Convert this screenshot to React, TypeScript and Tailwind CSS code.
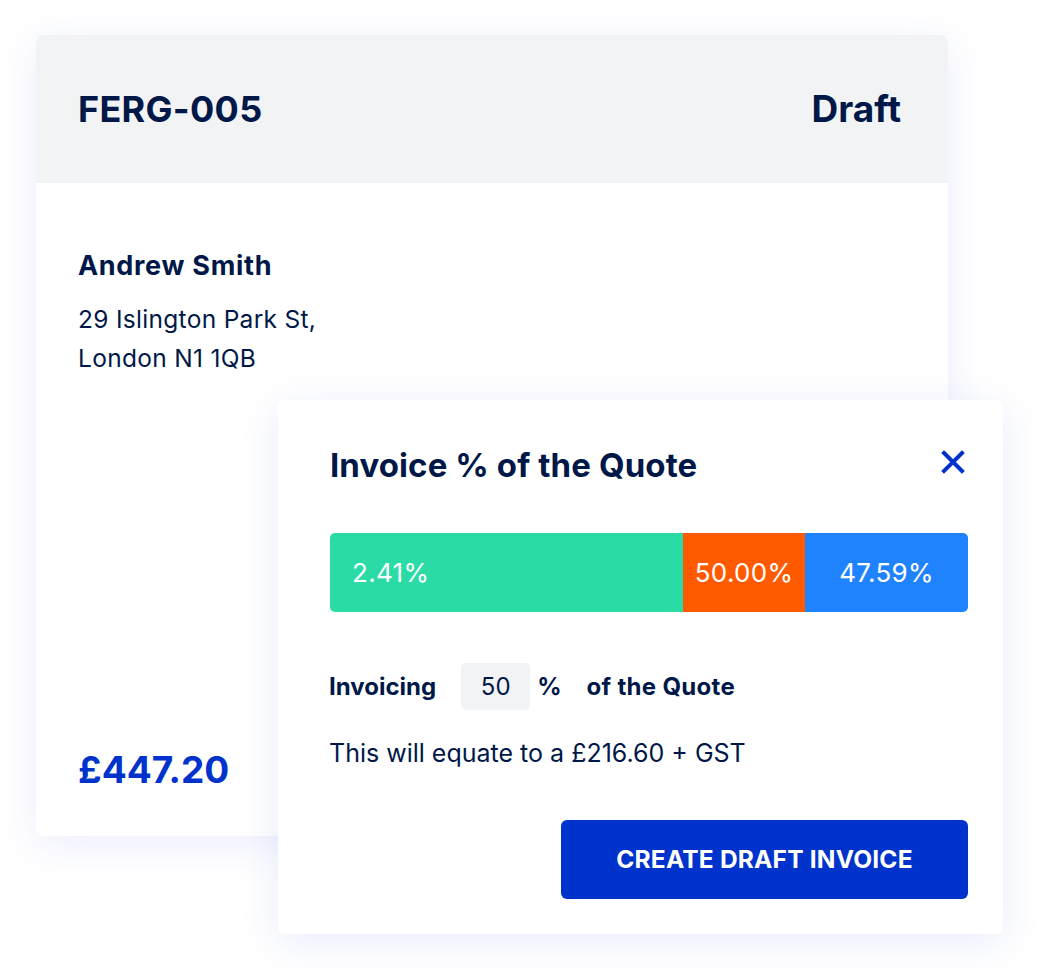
import React from 'react';

const segments = [
  { label: '2.41%', width: 353, color: 'bg-[#2adba5]', align: 'justify-start pl-[22px]' },
  { label: '50.00%', width: 122, color: 'bg-[#ff5a00]', align: 'justify-center' },
  { label: '47.59%', width: 163, color: 'bg-[#1f82ff]', align: 'justify-center' },
];

const App: React.FC = () => {
  return (
    <div className="relative w-[1059px] h-[968px] bg-white text-[#001848] font-['Inter','Liberation_Sans',sans-serif]">
      {/* Quote card */}
      <div className="absolute left-[36px] top-[35px] w-[912px] h-[801px] flex flex-col bg-white rounded-lg overflow-hidden shadow-[0_8px_40px_rgba(40,70,220,0.09)]">
        <div className="h-[148px] flex items-center justify-between pl-[42px] pr-[47px] bg-[#f2f3f5]">
          <span className="text-[36px] font-bold tracking-[0.3px]">FERG-005</span>
          <span className="text-[37px] font-bold">Draft</span>
        </div>
        <div className="flex-1 flex flex-col px-[42px] pt-[66px] pb-[42px]">
          <div className="text-[27px] font-bold leading-[34px] tracking-[0.7px]">Andrew Smith</div>
          <div className="mt-[17px] text-[24.5px] leading-[39px] tracking-[0.3px]">
            <div>29 Islington Park St,</div>
            <div>London N1 1QB</div>
          </div>
          <div className="mt-auto text-[37px] font-bold text-[#0033cc] leading-[48px]">£447.20</div>
        </div>
      </div>

      {/* Invoice % dialog */}
      <div className="absolute left-[278px] top-[400px] w-[725px] h-[534px] flex flex-col bg-white rounded-md pl-[51px] pr-[35px] pt-[45px] pb-[35px] shadow-[0_8px_40px_rgba(40,70,220,0.10)]">
        <div className="flex items-start justify-between">
          <h2 className="ml-[1px] text-[33px] font-bold leading-[40px] tracking-[0.1px]">Invoice % of the Quote</h2>
          <svg width="24" height="24" viewBox="0 0 24 24" className="mt-[5px] mr-[3px] text-[#0033cc]">
            <path d="M3 3 L21 21 M21 3 L3 21" stroke="currentColor" strokeWidth="4" strokeLinecap="square" fill="none" />
          </svg>
        </div>

        <div className="ml-[1px] mt-[48px] flex h-[79px] rounded-[5px] overflow-hidden">
          {segments.map((s) => (
            <div
              key={s.label}
              className={`flex items-center text-white text-[26px] tracking-[0.3px] ${s.color} ${s.align}`}
              style={{ width: s.width }}
            >
              {s.label}
            </div>
          ))}
        </div>

        <div className="mt-[51px] flex items-center text-[24px] font-bold">
          <span>Invoicing</span>
          <div className="ml-[25px] w-[69px] h-[47px] flex items-center justify-center rounded-[5px] bg-[#f2f3f5] font-normal">50</div>
          <span className="ml-[7px]">%</span>
          <span className="ml-[25px] tracking-[0.3px]">of the Quote</span>
        </div>

        <div className="mt-[25px] text-[25px] leading-[36px]">This will equate to a £216.60 + GST</div>

        <button className="mt-auto self-end w-[407px] h-[79px] rounded-md bg-[#0033cc] text-white text-[24.5px] font-bold tracking-[0.2px]">
          CREATE DRAFT INVOICE
        </button>
      </div>
    </div>
  );
};

export default App;
